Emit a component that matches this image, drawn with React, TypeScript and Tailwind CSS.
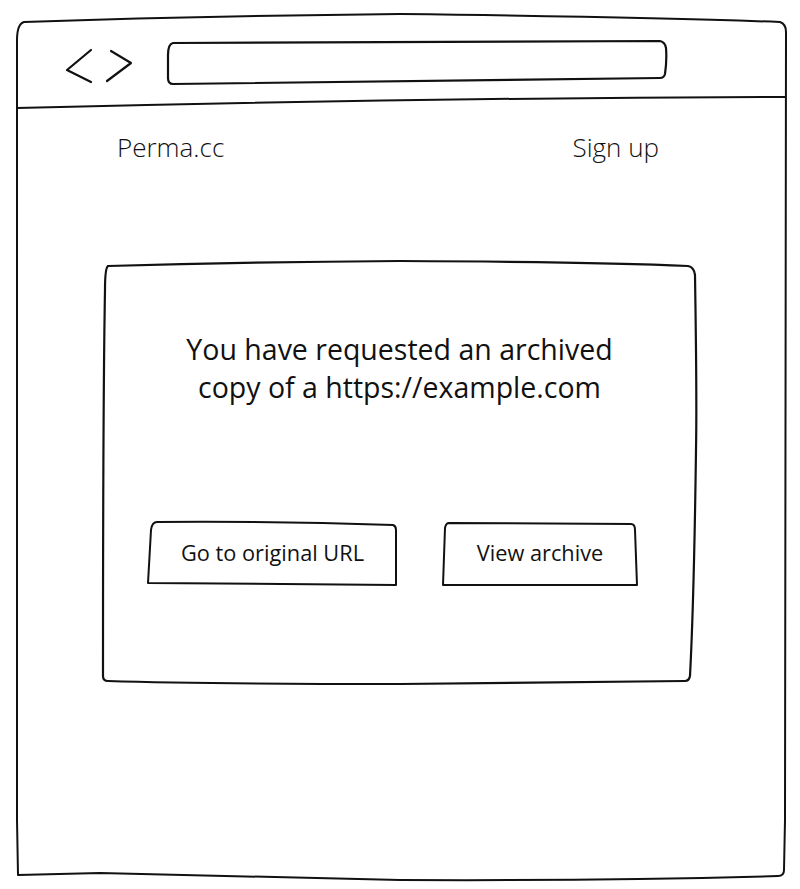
import type { ReactNode } from 'react';

// hand-drawn outline laid over a box; viewBox uses page coordinates
function Sketch({ box, d, stroke = 2 }: { box: string; d: string; stroke?: number }) {
  return (
    <svg
      className="pointer-events-none absolute inset-0 h-full w-full overflow-visible"
      viewBox={box}
      fill="none"
    >
      <path d={d} stroke="#111" strokeWidth={stroke} strokeLinecap="round" strokeLinejoin="round" />
    </svg>
  );
}

function SketchButton({
  width,
  box,
  d,
  children,
}: {
  width: string;
  box: string;
  d: string;
  children: ReactNode;
}) {
  return (
    <button className={`relative flex h-[63px] items-center justify-center text-[21.75px] text-[#111] ${width}`}>
      <Sketch box={box} d={d} />
      <span className="relative">{children}</span>
    </button>
  );
}

export default function App() {
  return (
    <div
      className="h-[889px] w-[800px] overflow-hidden bg-white pl-[17px] pt-[14px]"
      style={{ fontFamily: '"Open Sans", Lato, sans-serif' }}
    >
      <div className="relative flex h-[868px] w-[769px] flex-col">
        <Sketch
          box="17 14 769 868"
          stroke={2}
          d="M24 22 Q200 16 400 14 Q650 17 780 22 Q786 24 786 32 Q787 400 785 820 L784 870 Q784 876 778 876 Q600 881 400 880 Q200 876 100 873 L18 875 L17 820 Q16 400 17 40 Q17 24 24 22 Z M17 108 Q400 98 786 97"
        />

        {/* browser toolbar */}
        <div className="flex h-[88px] items-start pt-[27px]">
          <div className="relative ml-[47px] mt-[7px] h-[36px] w-[70px]">
            <Sketch box="64 48 70 36" stroke={2.2} d="M91 50 L67 70 L91 82 M111 51 L131 63 L107 81" />
          </div>
          <div className="relative ml-[33px] h-[44px] w-[500px]">
            <Sketch
              box="167 41 500 44"
              stroke={2.2}
              d="M173 43 Q400 41 660 41 Q665 42 666 48 Q667 60 665 74 Q664 78 660 78 Q400 82 173 84 Q168 84 168 78 L168 55 Q168 44 173 43 Z"
            />
          </div>
        </div>

        {/* site nav */}
        <div className="mt-[29px] flex justify-between pl-[100px] pr-[127px] text-[26px] font-light leading-[32px] text-[#111]">
          <span>Perma.cc</span>
          <span>Sign up</span>
        </div>

        {/* archive notice card */}
        <div className="relative ml-[86px] mt-[98px] flex h-[423px] w-[593px] flex-col items-center">
          <Sketch
            box="103 261 593 423"
            stroke={2.2}
            d="M108 266 Q250 262 400 261 Q600 262 688 266 Q694 267 695 275 Q697 400 696 450 Q694 600 690 676 Q689 681 685 681 L400 684 Q200 684 108 681 Q103 681 103 676 Q103 400 105 290 Q105 268 108 266 Z"
          />
          <p className="relative mt-[69px] text-center text-[28.5px] leading-[38px] text-[#111]">
            You have requested an archived
            <br />
            copy of a https://example.com
          </p>
          <div className="mt-[116px] flex w-full gap-[46px] pl-[45px]">
            <SketchButton
              width="w-[249px]"
              box="148 522 249 63"
              d="M157 522 Q270 521 393 525 Q396 526 396 530 L396 585 Q270 584 148 583 L151 530 Q152 522 157 522 Z"
            >
              Go to original URL
            </SketchButton>
            <SketchButton
              width="w-[194px]"
              box="443 522 194 63"
              d="M449 523 L631 524 Q635 524 635 530 L637 585 L443 585 L445 528 Q446 523 449 523 Z"
            >
              View archive
            </SketchButton>
          </div>
        </div>
      </div>
    </div>
  );
}
